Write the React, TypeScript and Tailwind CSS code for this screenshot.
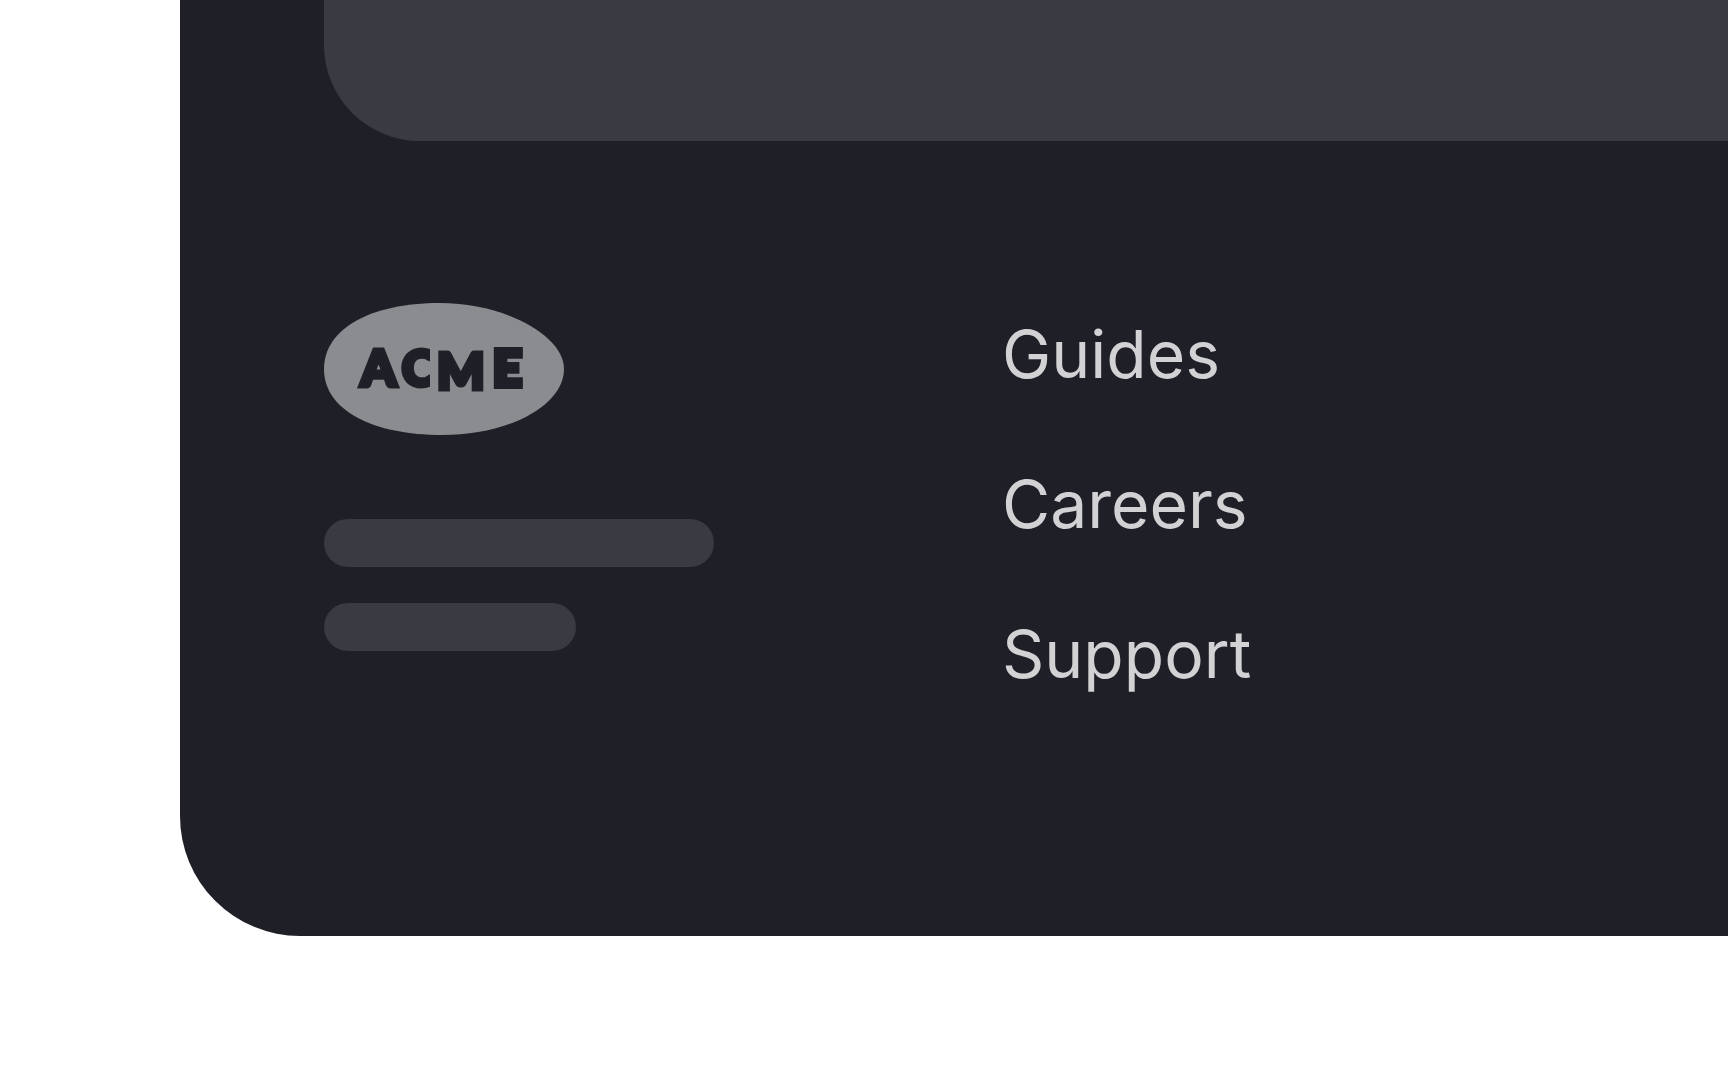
const links = [
  { label: "Guides", href: "#guides" },
  { label: "Careers", href: "#careers" },
  { label: "Support", href: "#support" },
];

const Logo = () => (
  <svg viewBox="0 0 240 132" className="w-60 h-[132px]" role="img" aria-label="Acme">
    <defs>
      {/* Cuts the open end of the C straight */}
      <clipPath id="c-cut">
        <rect x="70" y="30" width="36" height="70" />
      </clipPath>
    </defs>
    <path
      d="M116 0C180 0 240 32 240 66C240 102 186 132 118 132C50 132 0 108 0 66C0 26 46 0 116 0Z"
      fill="#8b8c8f"
    />
    <g
      fill="#1f1f28"
      stroke="#1f1f28"
      strokeWidth="5"
      fontFamily="Lato, sans-serif"
      fontSize="50"
      fontWeight="900"
    >
      <text x="37" y="83">A</text>
      <text x="78" y="83" clipPath="url(#c-cut)">C</text>
      <text x="113" y="86">M</text>
      <text x="169" y="83" strokeWidth="6">E</text>
    </g>
  </svg>
);

const Footer = () => (
  <footer className="grid grid-cols-[678px_1fr] pt-[162px] pb-[231px]">
    <div>
      <Logo />
      <div className="mt-[84px] h-12 w-[390px] rounded-full bg-[#3a3a42]" />
      <div className="mt-9 h-12 w-[252px] rounded-full bg-[#3a3a42]" />
    </div>
    <nav className="flex flex-col items-start gap-12">
      {links.map((link) => (
        <a
          key={link.label}
          href={link.href}
          className="font-['Inter',sans-serif] text-[66px] leading-[102px] text-[#d2d2d4]"
        >
          {link.label}
        </a>
      ))}
    </nav>
  </footer>
);

const App = () => (
  <div className="min-h-screen overflow-hidden bg-white pb-36 pl-[180px]">
    <div className="rounded-bl-[120px] bg-[#1f1f28] pl-36">
      {/* Bottom edge of the content panel */}
      <div className="h-[141px] rounded-bl-[96px] bg-[#3a3a42]" />
      <Footer />
    </div>
  </div>
);

export default App;
